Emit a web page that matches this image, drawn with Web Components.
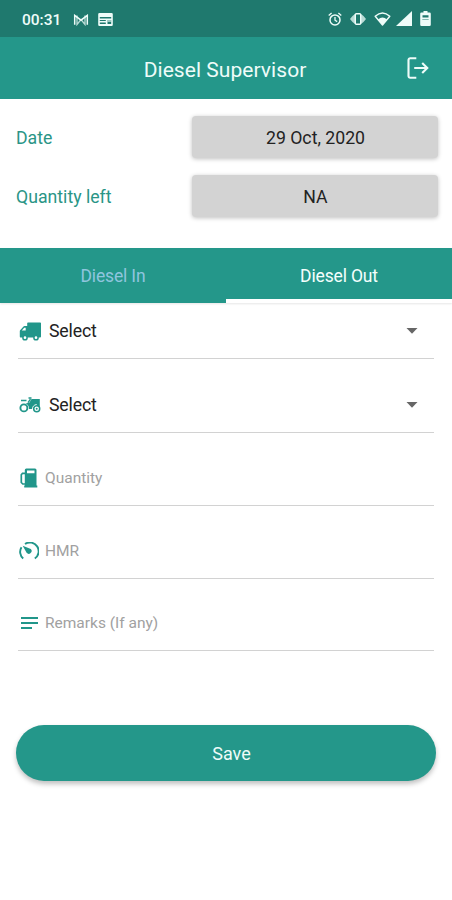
<!DOCTYPE html>
<html lang="en">
<head>
<meta charset="utf-8">
<title>Diesel Supervisor</title>
<style>
  html, body { margin: 0; height: 100%; background: #fff; }
  body { font-family: Roboto, "Liberation Sans", sans-serif; overflow: hidden; --teal: #24978a; --teal-dark: #1f796e; }
</style>
</head>
<body>
<diesel-app></diesel-app>
<script>
const ICONS = {
  mail: [16, 12, '<path d="M1.700 10.800V1.400L8 6.200l6.300-4.800v9.400" fill="none" stroke="currentColor" stroke-width="1.500"/><path d="M4 1.500v9L8 5.500l4 5v-9" fill="none" stroke="currentColor" stroke-width="1.300" opacity=".75"/>'],
  news: [15, 13, '<path fill="currentColor" fill-rule="evenodd" d="M1.500 0h12a1.300 1.300 0 0 1 1.300 1.300v10.400a1.300 1.300 0 0 1-1.300 1.300h-12A1.300 1.300 0 0 1 .2 11.700V1.300A1.300 1.300 0 0 1 1.500 0zM1.800 4v1.500h11.400V4zM1.800 7v1h6V7zM1.800 9.500v1.500h6V9.500zM9.500 7v4h3.700V7z"/><path fill="currentColor" opacity=".6" d="M9.500 7h3.700v2H9.500z"/>'],
  alarm: [14, 14, '<g fill="none" stroke="currentColor" stroke-width="1.500"><circle cx="7" cy="7.900" r="5"/><path d="M.7 3.400L3.600.9M13.300 3.400L10.400.9M7 5v3.200l2.200 1.400" stroke-width="1.300"/></g>'],
  vibrate: [16, 12, '<path fill="currentColor" opacity=".75" d="M0 6l2.500-3v6zM16 6l-2.500-3v6zM2.500 3L5 1v10L2.500 9zM13.500 3L11 1v10l2.500-2z"/><rect x="5.300" y=".7" width="5.400" height="10.600" rx="1" fill="none" stroke="currentColor" stroke-width="1.400"/>'],
  wifi: [17, 14, '<path d="M1.200 4.300Q8.500-2.400 15.800 4.300L8.500 13z" fill="none" stroke="currentColor" stroke-width="1.400" stroke-linejoin="round"/><path fill="currentColor" d="M4 7.500Q8.500 3.600 13 7.500L8.500 13z"/>'],
  signal: [16, 15, '<path fill="currentColor" d="M0 15L16 0v15z"/>'],
  battery: [11, 15, '<path fill="currentColor" fill-rule="evenodd" d="M3.500 0h4v1.500h2A1.300 1.300 0 0 1 10.800 2.800v10.900a1.300 1.300 0 0 1-1.300 1.300h-8A1.300 1.300 0 0 1 .2 13.700V2.800A1.300 1.300 0 0 1 1.500 1.500h2zM2.500 4.200v2.200h6V4.200z"/><path d="M2.300 8.500h6.400" stroke="#1f796e" opacity=".5"/>'],
  logout: [22, 22, '<path d="M9.300 1.300H3.200A1.700 1.700 0 0 0 1.500 3v16a1.700 1.700 0 0 0 1.700 1.700h6.100M7.200 11h13M15.200 5.900l5.100 5.100-5.100 5.100" fill="none" stroke="currentColor" stroke-width="2.100"/>'],
  truck: [22, 19, '<path fill="currentColor" fill-rule="evenodd" d="M8.200 1.300Q8.200.5 9 .5h12.200q.8 0 .8.800V14.500q0 1-1 1H1.500Q.8 15.500.8 14.500V9.200q0-.7.500-1.200l3-3.300q.5-.6 1.200-.6H8.200zM2.800 8.500H6.700V5.800H5.200z"/><g fill="#fff" stroke="currentColor" stroke-width="1.500"><circle cx="6" cy="15.700" r="2.100"/><circle cx="17" cy="15.700" r="2.100"/></g>'],
  tractor: [22, 16, '<g fill="none" stroke="currentColor"><circle cx="4.900" cy="10.900" r="3.500" stroke-width="1.900"/><path d="M2 3.500h5.500M9 5.600l2.500-3.500M9.500 1h3" stroke-width="1.500"/></g><path fill="currentColor" d="M12.500 2h8.300v10H10q.3-3.800-3.200-5.400L10.500 5.500z"/><circle cx="17.700" cy="11.800" r="3" fill="#fff" stroke="currentColor" stroke-width="1.500"/><circle cx="17.700" cy="11.800" r="1" fill="currentColor"/><path d="M13.400 12.500a4.500 4.500 0 0 1 4.300-5" fill="none" stroke="#fff" stroke-width=".9"/>'],
  fuel: [18, 20, '<path fill="currentColor" fill-rule="evenodd" d="M4.800 2Q4.800.5 6.300.5h8.700Q16.500.5 16.500 2v15.500h.8v2H4.200v-2h.6zM7 2.500v2.700h7.500V2.500z"/><path d="M5.500 5.300H2.500L1.300 6.800v7.700L2.800 16h3" fill="none" stroke="currentColor" stroke-width="1.700"/>'],
  gauge: [20, 18, '<g fill="none" stroke="currentColor" stroke-width="1.900"><path d="M6 2A8.700 8.700 0 0 1 15.800 16.500"/><path d="M2.500 5.200A8.700 8.700 0 0 0 4.200 16.500"/></g><path fill="currentColor" d="M3.700 3.700l8.100 3.200a2.700 2.700 0 1 1-4.200 3.900z"/>'],
  lines: [17, 12, '<path fill="currentColor" d="M0 0h17v2H0zM0 5h17v2H0zM0 10h11v2H0z"/>'],
  caret: [12, 6, '<path fill="#666" d="M.5 0h11L6 5.800z"/>']
};

function define(name, css, html) {
  customElements.define(name, class extends HTMLElement {
    constructor() {
      super();
      this.attachShadow({ mode: 'open' }).innerHTML = `<style>${css}</style>${html}`;
    }
  });
}

customElements.define('ui-icon', class extends HTMLElement {
  connectedCallback() {
    const [w, h, art] = ICONS[this.getAttribute('name')];
    const root = this.shadowRoot || this.attachShadow({ mode: 'open' });
    root.innerHTML = `<style>:host{display:block;flex:none}svg{display:block}</style>
      <svg width="${w}" height="${h}" viewBox="0 0 ${w} ${h}" aria-hidden="true">${art}</svg>`;
  }
});

define('status-bar', `
  :host { display: flex; align-items: center; justify-content: space-between; height: 37px; box-sizing: border-box;
    padding: 0 21px 0 22px; background: var(--teal-dark); color: #eefcf9; font-size: 15.500px; font-weight: 500; }
  div { display: flex; align-items: center; }
  .left { gap: 9px; padding-top: 2px; } .right { gap: 8px; }
  .left span { margin-right: 3px; } .right ui-icon[name=signal] { margin-left: -3px; }
`, `<div class="left"><span>00:31</span><ui-icon name="mail"></ui-icon><ui-icon name="news"></ui-icon></div>
<div class="right"><ui-icon name="alarm"></ui-icon><ui-icon name="vibrate"></ui-icon><ui-icon name="wifi"></ui-icon><ui-icon name="signal"></ui-icon><ui-icon name="battery"></ui-icon></div>`);

define('app-header', `
  :host { display: grid; grid-template-columns: 46px 1fr 46px; align-items: center; height: 62px; box-sizing: border-box;
    padding-top: 2px; background: var(--teal); color: #eefcf9; }
  .title { text-align: center; font-size: 21px; letter-spacing: .05px; padding: 2px 2px 0 0; }
  ui-icon { margin: -3px 0 0 1px; }
`, `<span></span><span class="title"><slot></slot></span><ui-icon name="logout"></ui-icon>`);

define('info-row', `
  :host { display: grid; grid-template-columns: 176px 246px; align-items: center; height: 42px; font-size: 17.700px; }
  .label { color: #2a9586; padding-top: 1px; }
  .value { display: flex; align-items: center; justify-content: center; height: 42px; box-sizing: border-box; padding: 2px 0 0 1px;
    border-radius: 4px; background: #d3d3d3; color: #222; box-shadow: 0 1px 4px rgba(0,0,0,.25); }
`, `<span class="label"><slot name="label"></slot></span><span class="value"><slot></slot></span>`);

define('tab-item', `
  :host { display: flex; flex: 1; align-items: center; justify-content: center; box-sizing: border-box; height: 55px;
    padding-top: 4px; border-bottom: 4px solid transparent; color: #8fc5de; font-size: 17.500px; letter-spacing: -.15px; }
  :host([active]) { color: #f4fffd; border-bottom-color: #fff; background-clip: padding-box; }
`, `<slot></slot>`);

define('tab-bar', `
  :host { display: flex; background: var(--teal); height: 55px; box-shadow: 0 1px 2px rgba(0,0,0,.1); }
`, `<slot></slot>`);

define('form-field', `
  :host { display: flex; align-items: center; height: 56px; box-sizing: border-box; border-bottom: 1.500px solid #d2d2d2;
    font-size: 15.500px; color: #a1a1a1; }
  .icon { display: flex; justify-content: center; width: 22px; color: #21968a; margin: 0 5px 0 0; }
  .text { flex: 1; }
  ui-icon[name=caret] { display: none; margin: 1px 16px 0 0; }
  :host([select]) { font-size: 17.700px; letter-spacing: -.15px; color: #222; }
  :host([select]) .icon { margin: 1px 8px 0 1px; }
  :host([select]) ui-icon[name=caret] { display: block; }
`, `<span class="icon"><slot name="icon"></slot></span><span class="text"><slot></slot></span><ui-icon name="caret"></ui-icon>`);

define('save-button', `
  :host { display: flex; align-items: center; justify-content: center; height: 56px; box-sizing: border-box; border-radius: 28px;
    padding: 0 0 0 11px; background: var(--teal); color: #eefcf9; font-size: 18px; box-shadow: 0 3px 5px rgba(0,0,0,.25); }
`, `<slot></slot>`);

define('diesel-app', `
  :host { display: flex; flex-direction: column; width: 452px; height: 900px; background: #fff; }
  .info { display: flex; flex-direction: column; gap: 17px; padding: 17px 14px 31px 16px; }
  form { display: flex; flex-direction: column; margin: 0; padding: 0 18px; }
  form-field + form-field { margin-top: 17px; }
  form-field:nth-child(2) { margin-top: 18px; }
  form-field:nth-child(5) { margin-top: 16px; }
  save-button { margin: 74px 16px 0; }
`, `<status-bar></status-bar>
<app-header>Diesel Supervisor</app-header>
<section class="info">
  <info-row><span slot="label">Date</span>29 Oct, 2020</info-row>
  <info-row><span slot="label">Quantity left</span>NA</info-row>
</section>
<tab-bar><tab-item>Diesel In</tab-item><tab-item active>Diesel Out</tab-item></tab-bar>
<form>
  <form-field select><ui-icon slot="icon" name="truck"></ui-icon>Select</form-field>
  <form-field select><ui-icon slot="icon" name="tractor"></ui-icon>Select</form-field>
  <form-field><ui-icon slot="icon" name="fuel"></ui-icon>Quantity</form-field>
  <form-field><ui-icon slot="icon" name="gauge"></ui-icon>HMR</form-field>
  <form-field><ui-icon slot="icon" name="lines"></ui-icon>Remarks (If any)</form-field>
</form>
<save-button>Save</save-button>`);
</script>
</body>
</html>
